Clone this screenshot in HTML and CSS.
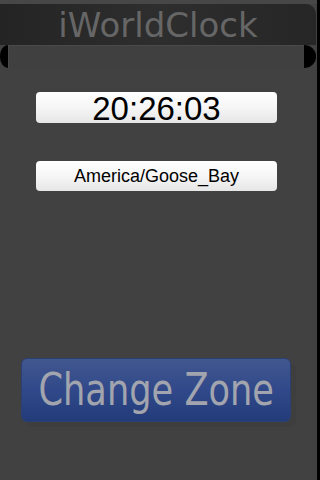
FILE: index.html
```html
<!DOCTYPE html>
<html>
<head>
<meta charset="utf-8">
<link rel="stylesheet" href="styles.css">
</head>
<body>
<div class="screen">
  <div class="main">
    <div class="topline"></div>
    <header class="titlebar"><h1 class="title">iWorldClock</h1></header>
    <div class="ribbon">
      <span class="fold fold-left"></span>
      <span class="ribbon-mid"></span>
      <span class="fold fold-right"></span>
    </div>
    <div class="content">
      <div class="field time">20:26:03</div>
      <div class="field zone">America/Goose_Bay</div>
      <button class="change"><span class="change-label">Change Zone</span></button>
    </div>
  </div>
  <div class="edge"></div>
</div>
</body>
</html>
```

FILE: styles.css
```css
html, body {
  margin: 0;
  padding: 0;
}
body {
  width: 320px;
  height: 480px;
  background: #414141;
  overflow: hidden;
}
.screen {
  display: flex;
  width: 320px;
  height: 480px;
}
.main {
  width: 317px;
  display: flex;
  flex-direction: column;
}
.edge {
  width: 3px;
  background: #000;
}
.topline {
  height: 4px;
  background: #474747;
}
.titlebar {
  width: 316px;
  height: 41px;
  background: linear-gradient(90deg, #242424 0%, #2e2e2e 50%, #262626 100%);
  border-radius: 0 10px 0 0;
  display: flex;
  justify-content: center;
  align-items: center;
}
.title {
  margin: 0;
  font-family: "Comic Sans MS", "DejaVu Sans", sans-serif;
  font-weight: normal;
  font-size: 34px;
  line-height: 41px;
  color: #666666;
  transform: translateY(1px);
}
.ribbon {
  display: flex;
  height: 23px;
  width: 316px;
}
.fold {
  display: block;
  background: #000;
}
.fold-left {
  width: 8px;
  border-radius: 8px 0 0 8px / 11px 0 0 11px;
}
.fold-right {
  width: 12px;
  border-radius: 0 12px 12px 0 / 0 11px 11px 0;
}
.ribbon-mid {
  flex: 1;
  border-top: 1px solid #4a4a4a;
  border-left: 1px solid #4a4a4a;
  background: #404040;
}
.content {
  display: flex;
  flex-direction: column;
  padding-top: 24px;
}
.field {
  margin-left: 36px;
  width: 241px;
  border-radius: 4px;
  background: linear-gradient(180deg, #ffffff 0%, #f6f6f6 50%, #e6e6e6 100%);
  color: #000;
  font-family: "Liberation Sans", Arial, sans-serif;
  text-align: center;
}
.time {
  height: 31px;
  line-height: 33px;
  font-size: 33px;
}
.zone {
  margin-top: 38px;
  height: 30px;
  line-height: 31px;
  font-size: 18px;
}
.change {
  margin: 167px 0 0 21px;
  width: 270px;
  height: 64px;
  padding: 0;
  border: 1px solid #2a3f72;
  border-radius: 6px;
  background: linear-gradient(180deg, #41578f 0%, #31498a 50%, #223b79 100%);
  box-shadow: 5px 5px 0 rgba(0, 0, 0, 0.04);
  display: flex;
  justify-content: center;
  align-items: center;
  overflow: visible;
}
.change-label {
  display: inline-block;
  font-family: "Comic Sans MS", "DejaVu Sans", sans-serif;
  font-size: 44px;
  line-height: 50px;
  color: #a2a5ae;
  transform: scaleX(0.8);
  white-space: nowrap;
}
```
